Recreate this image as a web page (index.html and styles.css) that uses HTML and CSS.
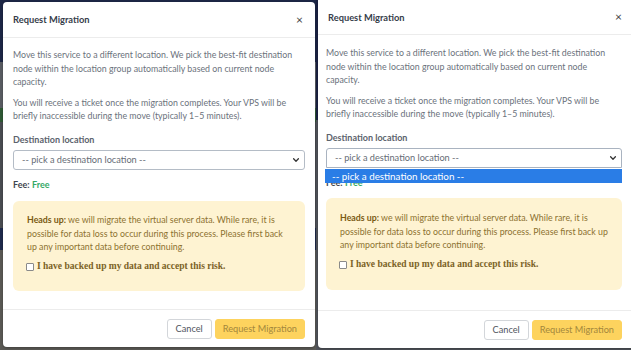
FILE: index.html
```html
<!DOCTYPE html>
<html lang="en">
<head>
    <meta charset="UTF-8">
    <meta name="viewport" content="width=device-width, initial-scale=1.0">
    <title>Request Migration</title>
    <link rel="stylesheet" href="styles.css">
</head>
<body>
    <div class="stage">
        <section class="pane pane-left">
            <div class="modal">
                <div class="modal-header">
                    <h2 class="modal-title">Request Migration</h2>
                    <span class="close">&times;</span>
                </div>
                <div class="modal-body">
                    <p>Move this service to a different location. We pick the best-fit destination node within the location group automatically based on current node capacity.</p>
                    <p>You will receive a ticket once the migration completes. Your VPS will be briefly inaccessible during the move (typically 1&ndash;5 minutes).</p>
                    <label class="field-label">Destination location</label>
                    <div class="select">
                        <span>-- pick a destination location --</span>
                        <svg class="chevron" viewBox="0 0 10 10" width="8" height="8"><path d="M2 3.5 L5 6.5 L8 3.5" fill="none" stroke="#333" stroke-width="1.6" stroke-linecap="round" stroke-linejoin="round"/></svg>
                    </div>
                    <div class="fee"><strong>Fee:</strong> <span class="free">Free</span></div>
                    <div class="alert">
                        <p><strong>Heads up:</strong> we will migrate the virtual server data. While rare, it is possible for data loss to occur during this process. Please first back up any important data before continuing.</p>
                        <label class="check"><span class="box"></span>I have backed up my data and accept this risk.</label>
                    </div>
                </div>
                <div class="modal-footer">
                    <button class="btn btn-cancel">Cancel</button>
                    <button class="btn btn-primary">Request Migration</button>
                </div>
            </div>
        </section>

        <section class="pane pane-right">
            <div class="modal modal-open">
                <div class="modal-header">
                    <h2 class="modal-title">Request Migration</h2>
                    <span class="close">&times;</span>
                </div>
                <div class="modal-body">
                    <p>Move this service to a different location. We pick the best-fit destination node within the location group automatically based on current node capacity.</p>
                    <p>You will receive a ticket once the migration completes. Your VPS will be briefly inaccessible during the move (typically 1&ndash;5 minutes).</p>
                    <label class="field-label">Destination location</label>
                    <div class="select-wrap">
                        <div class="select select-focus">
                            <span>-- pick a destination location --</span>
                            <svg class="chevron" viewBox="0 0 10 10" width="8" height="8"><path d="M2 3.5 L5 6.5 L8 3.5" fill="none" stroke="#333" stroke-width="1.6" stroke-linecap="round" stroke-linejoin="round"/></svg>
                        </div>
                        <div class="dropdown">-- pick a destination location --</div>
                    </div>
                    <div class="fee"><strong>Fee:</strong> <span class="free">Free</span></div>
                    <div class="alert">
                        <p><strong>Heads up:</strong> we will migrate the virtual server data. While rare, it is possible for data loss to occur during this process. Please first back up any important data before continuing.</p>
                        <label class="check"><span class="box"></span>I have backed up my data and accept this risk.</label>
                    </div>
                </div>
                <div class="modal-footer">
                    <button class="btn btn-cancel">Cancel</button>
                    <button class="btn btn-primary">Request Migration</button>
                </div>
            </div>
        </section>
    </div>
</body>
</html>
```

FILE: styles.css
```css
* {
    box-sizing: border-box;
}

body {
    margin: 0;
    padding: 0;
    font-family: 'Lato', 'Open Sans', sans-serif;
    background-color: #2b2f38;
    overflow: hidden;
}

.stage {
    display: flex;
    width: 631px;
    height: 350px;
}

.pane {
    height: 350px;
    overflow: hidden;
}

.pane-left {
    width: 316px;
    flex: none;
    padding: 2px 1px 0 3px;
    background: linear-gradient(to bottom,
        #1d2746 0, #1d2746 62px,
        #5a5d63 62px, #5a5d63 108px,
        #2f5a35 108px, #2f5a35 122px,
        #4a4d52 122px, #4a4d52 228px,
        #1f2a4c 228px, #1f2a4c 250px,
        #5b5a55 250px, #5b5a55 350px);
}

.pane-right {
    flex: 1;
    padding: 0 0 0 2px;
    background: linear-gradient(to bottom,
        #1a2142 0, #1a2142 120px,
        #50535a 120px, #50535a 350px);
}

.modal {
    background-color: #ffffff;
    border-radius: 4px;
    width: 312px;
    height: 345px;
    display: flex;
    flex-direction: column;
    box-shadow: 0 1px 3px rgba(0, 0, 0, 0.3);
}

.modal-open {
    width: 320px;
    height: 348px;
    border-radius: 0 0 0 4px;
}

.modal-header {
    height: 36px;
    flex: none;
    display: flex;
    align-items: center;
    justify-content: space-between;
    padding: 0 12px 0 10px;
    border-bottom: 1px solid #ececec;
}

.modal-open .modal-header {
    height: 35px;
    padding-right: 16px;
}

.modal-title {
    margin: 0;
    font-size: 9.3px;
    font-weight: 700;
    color: #363d4a;
}

.close {
    font-size: 12px;
    color: #444;
    line-height: 1;
}

.modal-body {
    flex: 1;
    padding: 10px 10px 0 10px;
    color: #6b727c;
    font-size: 8.8px;
    line-height: 13.6px;
}

.modal-open .modal-body {
    padding: 11px 16px 0 8px;
}

.modal-body p {
    margin: 0 0 7px 0;
}

.field-label {
    display: block;
    margin-top: 10px;
    margin-bottom: 3px;
    font-weight: 700;
    font-size: 9px;
    color: #5c636d;
}

.select-wrap {
    position: relative;
}

.select {
    height: 20px;
    display: flex;
    align-items: center;
    justify-content: space-between;
    padding: 0 4px 0 8px;
    border: 1px solid #b4bcc6;
    border-radius: 3px;
    color: #666c75;
    font-size: 9.2px;
}

.select-focus {
    border-color: #a9b3c0;
    border-radius: 3px 3px 0 0;
}

.dropdown {
    position: absolute;
    top: 21px;
    left: -1px;
    right: 0;
    height: 14px;
    padding-left: 7px;
    background-color: #2a7de6;
    color: #ffffff;
    font-size: 9.8px;
    line-height: 14px;
}

.fee {
    margin-top: 8px;
    color: #444b55;
    font-size: 9px;
}

.fee strong {
    font-weight: 700;
    color: #3f4650;
}

.free {
    color: #34a865;
    font-weight: 700;
}

.alert {
    margin-top: 10px;
    background-color: #fef3d2;
    border-radius: 6px;
    padding: 12px 14px 17px 14px;
    color: #8c712f;
}

.modal-open .alert {
    margin-top: 9px;
    padding-top: 13px;
    padding-bottom: 18px;
}

.alert p {
    margin: 0 0 6px 0;
}

.alert strong {
    color: #7a5a12;
    font-weight: 700;
}

.check {
    display: flex;
    align-items: center;
    font-family: 'Liberation Serif', serif;
    font-weight: 700;
    font-size: 9.5px;
    color: #7b6226;
}

.box {
    width: 8px;
    height: 8px;
    margin-right: 3px;
    margin-left: -1px;
    border: 1px solid #8a8a8a;
    border-radius: 1px;
    background-color: #ffffff;
}

.modal-footer {
    height: 38px;
    flex: none;
    display: flex;
    align-items: center;
    justify-content: flex-end;
    gap: 3px;
    padding: 0 10px;
    border-top: 1px solid #ececec;
}

.modal-open .modal-footer {
    padding-right: 16px;
}

.btn {
    height: 20px;
    padding: 0 8px;
    border-radius: 3px;
    font-family: inherit;
    font-size: 9.2px;
}

.btn-cancel {
    background-color: #ffffff;
    border: 1px solid #d3d6da;
    color: #4f555d;
}

.btn-primary {
    background-color: #fdd35e;
    border: 1px solid #fdd35e;
    color: #a3873c;
    padding: 0 7px;
}
```
